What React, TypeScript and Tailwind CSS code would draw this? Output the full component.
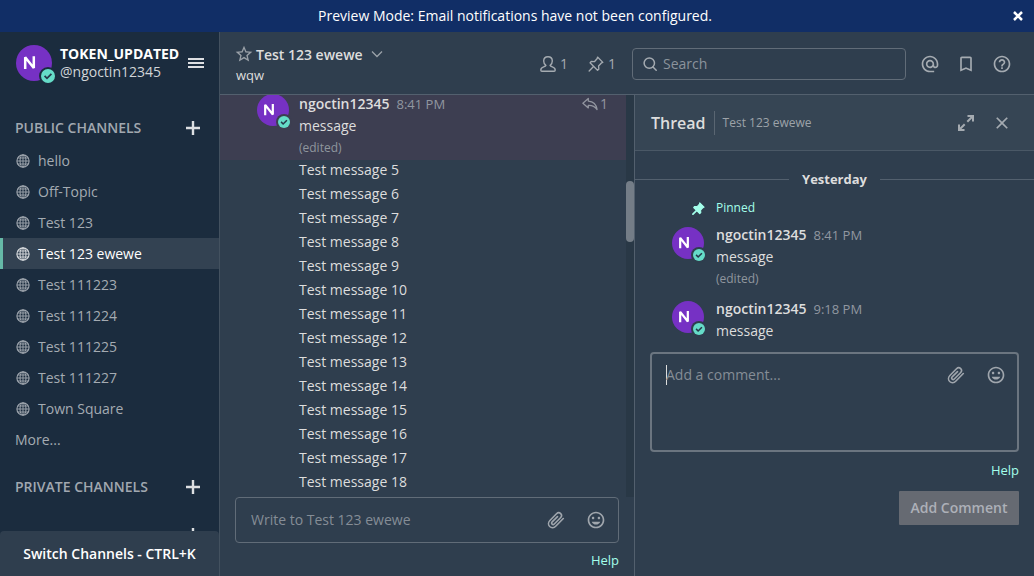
import React, { useState } from 'react';
import {
  MdAlternateEmail,
  MdBookmarkBorder,
  MdClose,
  MdHelpOutline,
  MdInsertEmoticon,
  MdStarOutline,
} from 'react-icons/md';

function Globe() {
  return (
    <svg viewBox="0 0 14 14" className="size-[14px] shrink-0" fill="none" stroke="currentColor" aria-hidden="true">
      <circle cx="7" cy="7" r="6.1" strokeWidth="1.1" />
      <ellipse cx="7" cy="7" rx="3" ry="6.1" strokeWidth="1" />
      <path d="M7 1v12M1 7h12M1.800 4h10.400M1.800 10h10.400" strokeWidth="0.9" />
    </svg>
  );
}

function Pushpin({ solid = false, className }: { solid?: boolean; className: string }) {
  return (
    <svg viewBox="0 0 18 18" className={className} fill={solid ? 'currentColor' : 'none'} stroke="currentColor" strokeWidth="1.500" strokeLinejoin="round" strokeLinecap="round" aria-hidden="true">
      <path d="M10.700 1.200l6 6-1.600.6-3.200 3.500.3 3.500-1.500 1.300L2.300 7.700l1.300-1.500 3.600.2 3.200-3.600z" />
      <path d="M6.200 11.900l-4.900 4.900" strokeWidth={solid ? 2.400 : 1.500} />
    </svg>
  );
}

function Person() {
  return (
    <svg viewBox="0 0 16 16" className="size-4" fill="none" stroke="currentColor" strokeWidth="1.400" strokeLinejoin="round" aria-hidden="true">
      <path d="M8 .8c-2.700 0-4.300 1.700-4.300 4.200 0 1.800.8 3.500 2.200 4.400-.3.700-1 1-2.200 1.400C1.800 11.400.8 12.300.8 14c0 .8.3 1.200 1.100 1.200h12.200c.8 0 1.100-.4 1.100-1.200 0-1.700-1-2.600-2.900-3.200-1.200-.4-1.900-.7-2.200-1.400C11.500 8.500 12.300 6.800 12.300 5c0-2.500-1.600-4.200-4.300-4.200z" />
    </svg>
  );
}

function Search() {
  return (
    <svg viewBox="0 0 14 14" className="size-[14px] shrink-0" fill="none" stroke="currentColor" strokeWidth="1.500" strokeLinecap="round" aria-hidden="true">
      <circle cx="6.300" cy="6.100" r="5.200" />
      <path d="M10 10l3.200 3.200" />
    </svg>
  );
}

function Reply() {
  return (
    <svg viewBox="0 0 16 14" className="h-[14px] w-4" fill="none" stroke="currentColor" strokeWidth="1.300" strokeLinejoin="round" aria-hidden="true">
      <path d="M6.300 1.500L.9 6.200l5.400 4.700V8.300c3.800-.2 6.500 1 8.800 4.200-.7-4.700-3.800-8-8.800-8.400z" />
    </svg>
  );
}

function Paperclip() {
  return (
    <span className="flex size-5 items-center justify-center">
      <svg viewBox="0 0 18 18" className="size-[18px]" fill="none" stroke="currentColor" strokeWidth="1.600" strokeLinecap="round" aria-hidden="true">
        <path d="M16.300 7.500l-7.600 7.700c-1.700 1.700-4.300 1.900-6 .3-1.700-1.700-1.500-4.300.2-6l6.600-6.700c1.200-1.200 3-1.300 4.200-.2 1.100 1.200 1 3-.2 4.200l-6.200 6.200c-.7.700-1.600.7-2.200.1-.6-.6-.6-1.500.1-2.200l5.300-5.300" />
      </svg>
    </span>
  );
}

function Expand() {
  return (
    <svg viewBox="0 0 20 20" className="size-5" fill="none" stroke="currentColor" strokeWidth="2" aria-hidden="true">
      <path d="M11.500 3H17v5.500M17 3l-5.700 5.700M8.500 17H3v-5.500M3 17l5.700-5.700" />
    </svg>
  );
}

function Plus() {
  return (
    <svg viewBox="0 0 14 14" className="size-[14px]" fill="none" stroke="currentColor" strokeWidth="2.400" aria-hidden="true">
      <path d="M7 0v14M0 7h14" />
    </svg>
  );
}

function Avatar({ large = false, ring }: { large?: boolean; ring: string }) {
  return (
    <div className={`relative shrink-0 rounded-full bg-[#7631c4] ${large ? 'size-9' : 'size-8'}`}>
      <svg viewBox="0 0 36 36" className="size-full" fill="none" stroke="#fff" strokeWidth="2.500" aria-hidden="true">
        <path d="M9.200 24V12.200L17.800 23V11.200" strokeLinejoin="bevel" />
      </svg>
      <span className={`absolute ${large ? '-right-[5px] -bottom-[4px]' : '-right-[3px] -bottom-[4px]'} rounded-full p-[2px] ${ring}`}>
        <svg viewBox="0 0 14 14" className={large ? 'size-[14px]' : 'size-3'} aria-hidden="true">
          <circle cx="7" cy="7" r="7" fill="#65dcc8" />
          <path d="M3.600 6.900l2.400 2.400 4.400-4.400" fill="none" stroke="#26384a" strokeWidth="1.800" />
        </svg>
      </span>
    </div>
  );
}

const channels = ['hello', 'Off-Topic', 'Test 123', 'Test 123 ewewe', 'Test 111223', 'Test 111224', 'Test 111225', 'Test 111227', 'Town Square'];
const messages = Array.from({ length: 14 }, (_, i) => `Test message ${i + 5}`);

function GroupTitle({ title, addLabel }: { title?: string; addLabel: string }) {
  return (
    <div className="flex h-8 items-center pr-[19px] pl-[15px]">
      {title && <h2 className="font-semibold text-[#a1a8b0]">{title}</h2>}
      <button aria-label={addLabel} className="ml-auto text-[#dddfe2]"><Plus /></button>
    </div>
  );
}

function Sidebar() {
  return (
    <aside className="flex w-[220px] shrink-0 flex-col border-r border-[#43515f] bg-[#1b2c3e]">
      <div className="flex h-[62px] shrink-0 items-center pl-4">
        <Avatar large ring="bg-[#1b2c3e]" />
        <div className="ml-2 w-[120px] leading-[18px]">
          <div className="font-bold text-white">TOKEN_UPDATED</div>
          <div className="text-[#d1d5d8]">@ngoctin12345</div>
        </div>
        <button aria-label="Main menu" className="ml-2 flex w-4 flex-col gap-[2px]">
          <span className="h-[2px] w-full bg-[#dddfe2]" />
          <span className="h-[2px] w-full bg-[#dddfe2]" />
          <span className="h-[2px] w-full bg-[#dddfe2]" />
        </button>
      </div>
      <nav className="min-h-0 flex-1 overflow-hidden pt-[18px]">
        <GroupTitle title="PUBLIC CHANNELS" addLabel="Add public channel" />
        <ul className="pt-px">
          {channels.map((name, i) => (
            <li key={name}>
              <a href="#" className={`flex h-[31px] items-center gap-2 border-l-[3px] pl-[13px] ${i === 3 ? 'border-[#66b9a7] bg-[#334252] text-white' : 'border-transparent text-[#a4abb2]'}`}>
                <span className={i === 3 ? 'text-[#dadde0]' : 'text-[#a1a8b0]'}><Globe /></span>
                {name}
              </a>
            </li>
          ))}
        </ul>
        <a href="#" className="flex h-[31px] items-center pl-[15px] text-[#a4abb2]">More...</a>
        <div className="pt-4"><GroupTitle title="PRIVATE CHANNELS" addLabel="Add private channel" /></div>
        <div className="pt-4"><GroupTitle addLabel="New direct message" /></div>
      </nav>
      <button className="h-[45px] shrink-0 rounded-t-sm bg-[#2f3e4e] font-semibold text-white">Switch Channels - CTRL+K</button>
    </aside>
  );
}

function Header() {
  return (
    <header className="flex h-[63px] shrink-0 items-center border-b border-[#53606e] pt-[2px] pr-[22px] pl-[14px]">
      <div className="pt-px leading-[21px]">
        <div className="flex items-center gap-[2px]">
          <button aria-label="Favorite" className="text-[#9aa1a8]"><MdStarOutline className="size-5" /></button>
          <h1 className="font-semibold text-[#dddddd]">Test 123 ewewe</h1>
          <button aria-label="Channel menu" className="ml-[6px] text-[#9ba2a9]">
            <svg viewBox="0 0 12 8" className="h-2 w-3" fill="none" stroke="currentColor" strokeWidth="1.300" aria-hidden="true"><path d="M1 1.500l5 5 5-5" /></svg>
          </button>
        </div>
        <div className="pl-[2px] text-[13px] text-[#dddddd]">wqw</div>
      </div>
      <div className="ml-auto flex items-center text-[#a5abb1]">
        <button aria-label="Members" className="flex items-center gap-1"><Person />1</button>
        <button aria-label="Pinned posts" className="ml-5 flex items-center gap-1"><Pushpin className="size-4" />1</button>
        <label className="ml-4 flex h-8 w-[274px] items-center rounded-sm border border-[#616c78] px-[10px]">
          <Search />
          <input aria-label="Search" placeholder="Search" className="ml-[6px] w-full min-w-0 bg-transparent outline-none placeholder:text-[#8b939c]" />
        </label>
        <div className="ml-[14px] flex gap-4">
          <button aria-label="Mentions"><MdAlternateEmail className="size-5" /></button>
          <button aria-label="Saved posts"><MdBookmarkBorder className="size-5" /></button>
          <button aria-label="Help"><MdHelpOutline className="size-5" /></button>
        </div>
      </div>
    </header>
  );
}

function PostBody({ time, edited = false, replies = false }: { time: string; edited?: boolean; replies?: boolean }) {
  return (
    <div className="flex-1">
      <div className="flex h-[22px] items-center">
        <span className="font-semibold text-[#dddddd]">ngoctin12345</span>
        <time className="ml-[7px] text-[13px] text-[#9197a0]">{time}</time>
        {replies && <button aria-label="1 reply" className="ml-auto flex items-center gap-[2px] text-[#92959f]"><Reply />1</button>}
      </div>
      <p className="h-[22px] leading-[22px] text-[#dddddd]">message</p>
      {edited && <p className="h-[22px] text-xs leading-[22px] text-[#8f969e]">(edited)</p>}
    </div>
  );
}

function Center() {
  return (
    <main className="flex min-w-0 flex-1 flex-col">
      <div className="flex min-h-0 flex-1">
        <div className="min-w-0 flex-1 overflow-hidden">
          <article className="flex h-[65px] gap-[10px] bg-[#3d3e51] pr-[18px] pl-[37px]">
            <div className="-mt-px"><Avatar ring="bg-[#3d3e51]" /></div>
            <div className="-mt-[2px] flex flex-1"><PostBody time="8:41 PM" edited replies /></div>
          </article>
          <div className="pl-[79px] leading-6 text-[#dddddd]">
            {messages.map((m) => <p key={m} className="-mt-[2px] mb-[2px]">{m}</p>)}
          </div>
        </div>
        <div className="w-2 bg-[#293846] pt-[86px]"><div className="h-[61px] rounded-full bg-[#747d87]" /></div>
      </div>
      <form className="px-[15px]">
        <div className="flex h-[46px] items-center rounded-sm border border-[#616c78] pr-3 pl-[15px] text-[#a0a6ad]">
          <input aria-label="Message" placeholder="Write to Test 123 ewewe" className="min-w-0 flex-1 bg-transparent outline-none placeholder:text-[#858d96]" />
          <button type="button" aria-label="Attach file"><Paperclip /></button>
          <button type="button" aria-label="Emoji" className="ml-5"><MdInsertEmoticon className="size-5" /></button>
        </div>
        <div className="flex h-[33px] items-center justify-end pt-px text-[13px] text-[#a4ffeb]"><a href="#">Help</a></div>
      </form>
    </main>
  );
}

function Thread() {
  const [comment, setComment] = useState('');
  return (
    <aside className="flex w-[400px] shrink-0 flex-col border-l border-[#53606e]">
      <header className="flex h-14 shrink-0 items-center border-b border-[#4a5866] bg-[#364554] pr-[22px] pl-4">
        <h2 className="text-base font-semibold text-[#dddddd]">Thread</h2>
        <a href="#" className="ml-2 flex h-6 items-center border-l border-[#5a6672] pl-2 text-xs text-[#9da3a9]">Test 123 ewewe</a>
        <div className="ml-auto flex gap-4 text-[#a5abb1]">
          <button aria-label="Expand thread"><Expand /></button>
          <button aria-label="Close thread"><MdClose className="size-5" /></button>
        </div>
      </header>
      <div className="flex h-[49px] items-center pt-2 text-[13px] font-bold text-[#dddddd]">
        <span className="h-px flex-1 bg-[#53606e]" />
        <span className="px-[13px]">Yesterday</span>
        <span className="h-px flex-1 bg-[#53606e]" />
      </div>
      <div className="flex h-4 items-center pl-[57px] text-xs leading-4 text-[#a4ffeb]">
        <Pushpin solid className="size-[13px]" />
        <span className="ml-[11px]">Pinned</span>
      </div>
      <article className="flex gap-3 pt-2 pl-[37px]">
        <div className="pt-[3px]"><Avatar ring="bg-[#2f3e4e]" /></div>
        <PostBody time="8:41 PM" edited />
      </article>
      <article className="flex gap-3 pt-2 pl-[37px]">
        <div className="pt-[3px]"><Avatar ring="bg-[#2f3e4e]" /></div>
        <PostBody time="9:18 PM" />
      </article>
      <form className="px-[15px] pt-[10px]">
        <div className="flex h-[100px] items-start rounded-sm border-2 border-[#6b7580] pt-[11px] pr-[11px] pl-[14px] text-[#a0a6ad]">
          {comment === '' && <span className="-mr-px h-5 w-px bg-[#dddddd]" />}
          <textarea aria-label="Comment" value={comment} onChange={(e) => setComment(e.target.value)} placeholder="Add a comment..." className="h-20 min-w-0 flex-1 resize-none bg-transparent leading-5 caret-[#dddddd] outline-none placeholder:text-[#858d96]" />
          <button type="button" aria-label="Attach file"><Paperclip /></button>
          <button type="button" aria-label="Emoji" className="ml-5"><MdInsertEmoticon className="size-5" /></button>
        </div>
        <div className="flex h-9 items-center justify-end text-[13px] text-[#a4ffeb]"><a href="#">Help</a></div>
        <div className="flex justify-end pt-[3px]">
          <button disabled className="h-[34px] w-[120px] rounded-[1px] bg-[#666a72] font-semibold text-[#adb0b8]">Add Comment</button>
        </div>
      </form>
    </aside>
  );
}

export default function App() {
  return (
    <div className="flex h-screen flex-col overflow-hidden bg-[#2f3e4e] font-['Open_Sans',sans-serif] text-sm">
      <div className="flex h-8 shrink-0 items-center bg-[#112e66] pr-[10px] text-white">
        <p className="flex-1 pl-[18px] text-center">Preview Mode: Email notifications have not been configured.</p>
        <button aria-label="Dismiss">
          <svg viewBox="0 0 12 12" className="size-3" fill="none" stroke="currentColor" strokeWidth="2.500" aria-hidden="true"><path d="M2 2l8 8M10 2l-8 8" /></svg>
        </button>
      </div>
      <div className="flex min-h-0 flex-1">
        <Sidebar />
        <div className="flex min-w-0 flex-1 flex-col">
          <Header />
          <div className="flex min-h-0 flex-1">
            <Center />
            <Thread />
          </div>
        </div>
      </div>
    </div>
  );
}
